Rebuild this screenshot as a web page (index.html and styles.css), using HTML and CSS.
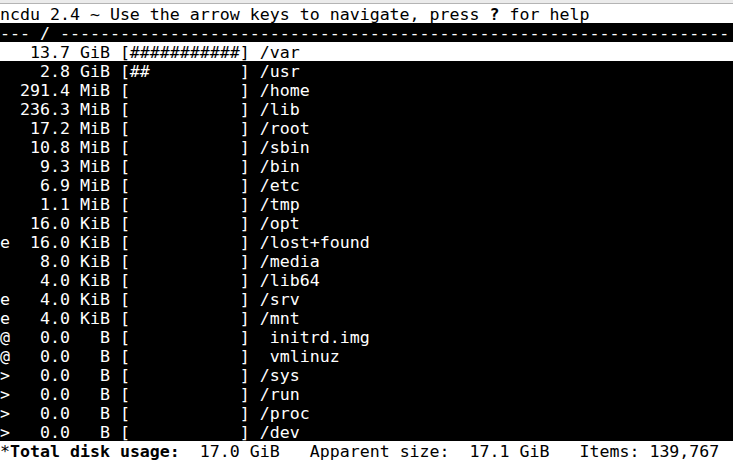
FILE: index.html
```html
<!DOCTYPE html>
<html>
<head>
<meta charset="utf-8">
<link rel="stylesheet" href="styles.css">
</head>
<body>
<div class="window">
<div class="titlebar"></div>
<div class="term">
<div class="row inv">ncdu 2.4 ~ Use the arrow keys to navigate, press <b>?</b> for help</div>
<div class="row">--- / -------------------------------------------------------------------</div>
<div class="row inv">   13.7 GiB [###########] /var</div>
<div class="row">    2.8 GiB [##         ] /usr</div>
<div class="row">  291.4 MiB [           ] /home</div>
<div class="row">  236.3 MiB [           ] /lib</div>
<div class="row">   17.2 MiB [           ] /root</div>
<div class="row">   10.8 MiB [           ] /sbin</div>
<div class="row">    9.3 MiB [           ] /bin</div>
<div class="row">    6.9 MiB [           ] /etc</div>
<div class="row">    1.1 MiB [           ] /tmp</div>
<div class="row">   16.0 KiB [           ] /opt</div>
<div class="row">e  16.0 KiB [           ] /lost+found</div>
<div class="row">    8.0 KiB [           ] /media</div>
<div class="row">    4.0 KiB [           ] /lib64</div>
<div class="row">e   4.0 KiB [           ] /srv</div>
<div class="row">e   4.0 KiB [           ] /mnt</div>
<div class="row">@   0.0   B [           ]  initrd.img</div>
<div class="row">@   0.0   B [           ]  vmlinuz</div>
<div class="row">&gt;   0.0   B [           ] /sys</div>
<div class="row">&gt;   0.0   B [           ] /run</div>
<div class="row">&gt;   0.0   B [           ] /proc</div>
<div class="row">&gt;   0.0   B [           ] /dev</div>
<div class="row inv">*<b>Total disk usage:</b>  17.0 GiB   Apparent size:  17.1 GiB   Items: 139,767</div>
</div>
</div>
</body>
</html>
```
FILE: styles.css
```css
html, body {
  margin: 0;
  padding: 0;
  background: #000;
}
.window {
  width: 733px;
  height: 460px;
  overflow: hidden;
  display: flex;
  flex-direction: column;
}
.titlebar {
  height: 3px;
  background: #ebebeb;
  border-bottom: 1px solid #b4b4b4;
  flex: none;
}
.term {
  display: flex;
  flex-direction: column;
  background: #000;
  color: #fff;
  font-family: "DejaVu Sans Mono", monospace;
  font-size: 16.6px;
}
.row {
  height: 19px;
  line-height: 21px;
  white-space: pre;
  overflow: hidden;
  flex: none;
}
.inv {
  background: #fff;
  color: #000;
}
b {
  font-weight: bold;
}
```
